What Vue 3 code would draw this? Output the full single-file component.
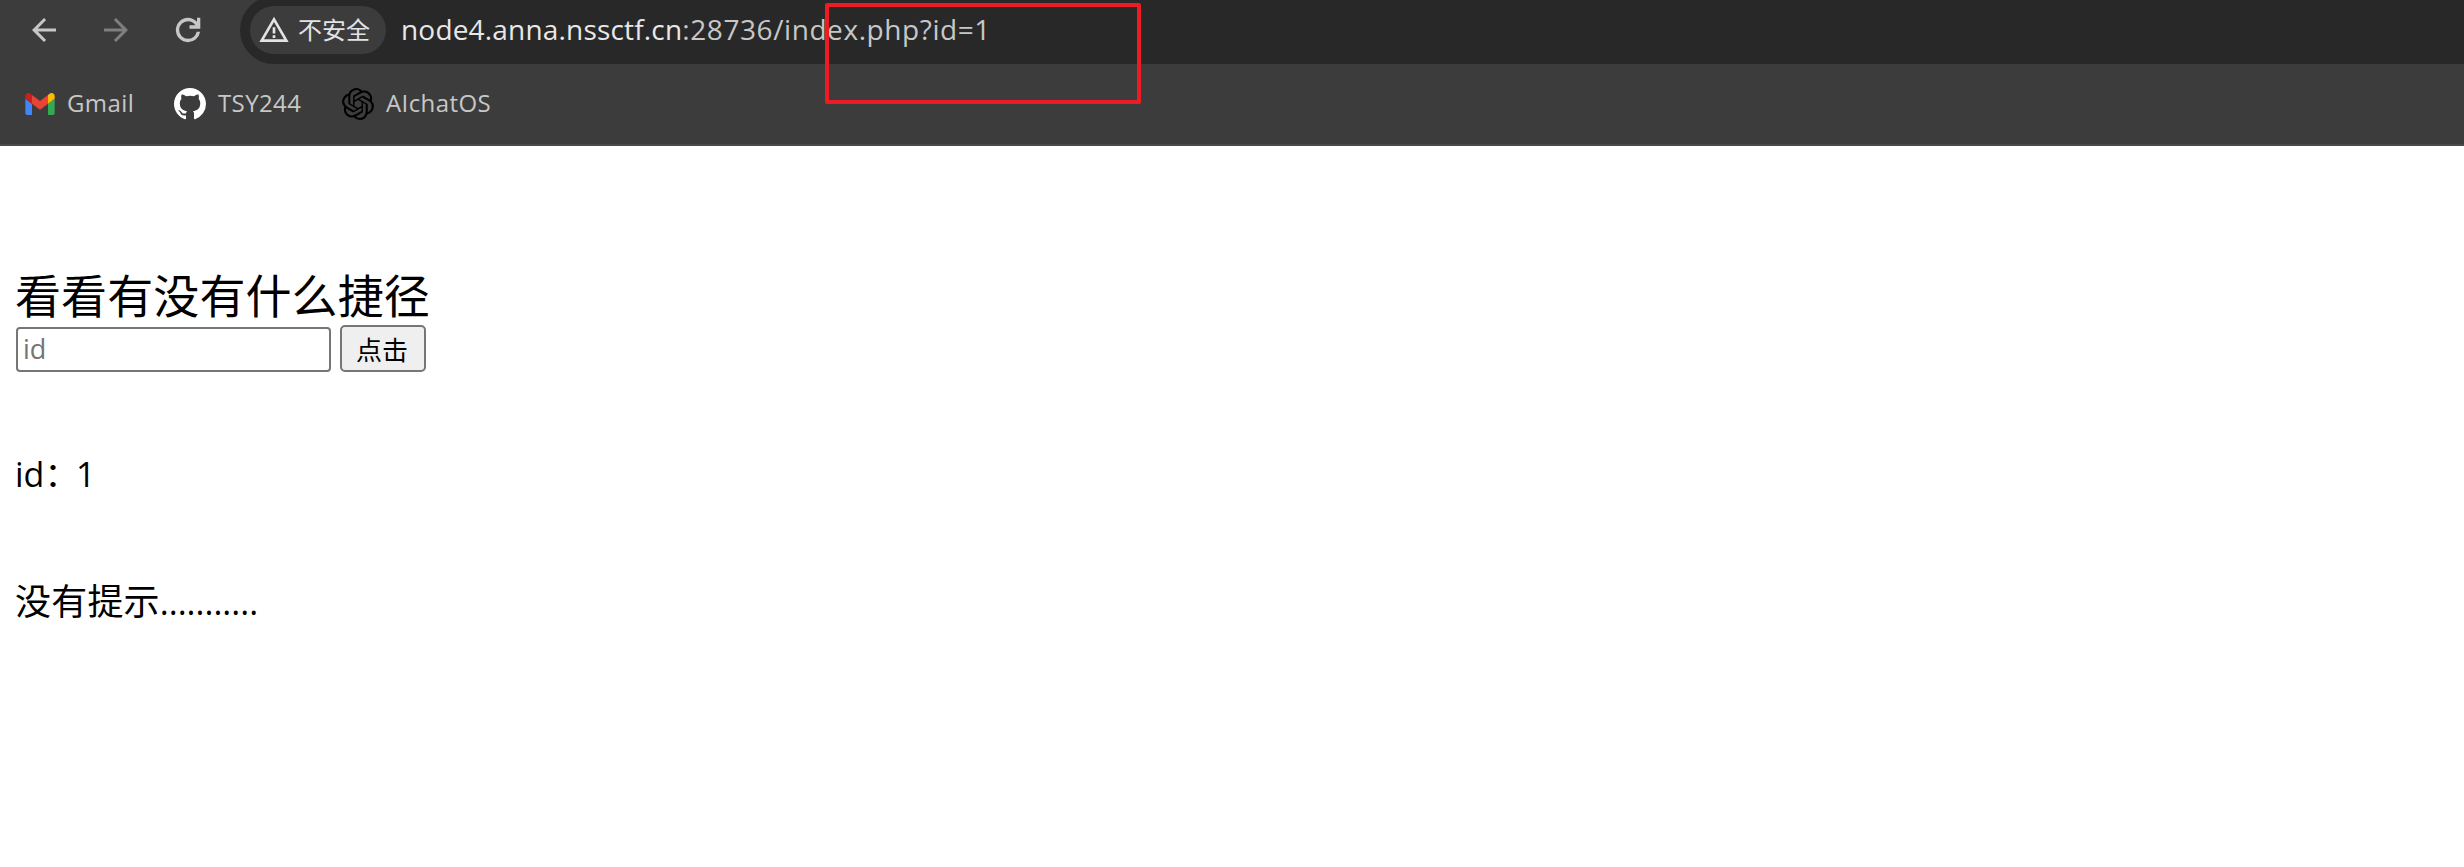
<script setup>
const host = 'node4.anna.nssctf.cn'
const path = ':28736/index.php?id=1'
</script>

<template>
  <div class="window">
    <header class="chrome">
      <div class="toolbar">
        <nav class="nav">
          <svg class="nav-icon" viewBox="0 0 24 24"><path d="M20 11H7.83l5.59-5.59L12 4l-8 8 8 8 1.41-1.41L7.83 13H20v-2z" /></svg>
          <svg class="nav-icon dim" viewBox="0 0 24 24"><path d="M4 11h12.17l-5.59-5.59L12 4l8 8-8 8-1.41-1.41L16.17 13H4v-2z" /></svg>
          <svg class="nav-icon" viewBox="0 0 24 24"><path d="M12 20.1q-3.38 0-5.74-2.36T3.9 12t2.36-5.74T12 3.9q1.725 0 3.3.713T18 6.55V3.9h2.2v7.2H13V8.9h3.9q-.8-1.3-2.1-2T12 6.1Q9.55 6.1 7.82 7.82T6.1 12t1.72 4.18T12 17.9q2.1 0 3.7-1.3T17.8 13.200h2.3q-.5 3-2.8 4.950T12 20.1z" /></svg>
        </nav>
        <div class="omnibox">
          <div class="chip">
            <svg class="warn" viewBox="0 0 24 24"><path d="M12 5.99L19.53 19H4.47L12 5.99M12 2L1 21h22L12 2zm1 14h-2v2h2v-2zm0-6h-2v4.7h2V10z" /></svg>
            <span class="chip-text">不安全</span>
          </div>
          <div class="url"><span class="host">{{ host }}</span><span class="path">{{ path }}</span></div>
        </div>
      </div>
      <div class="bookmarks">
        <div class="bookmark gmail">
          <svg class="gmail-icon" viewBox="52 42 88 66">
            <path fill="#4285f4" d="M58 108h14V74L52 59v43c0 3.320 2.690 6 6 6" />
            <path fill="#34a853" d="M120 108h14c3.320 0 6-2.690 6-6V59l-20 15" />
            <path fill="#fbbc04" d="M120 48v26l20-15v-8c0-7.420-8.470-11.650-14.400-7.200" />
            <path fill="#ea4335" d="M72 74V48l24 18 24-18v26L96 92" />
            <path fill="#c5221f" d="M52 51v8l20 15V48l-5.600-4.200c-5.940-4.450-14.400-.220-14.400 7.200" />
          </svg>
          <span class="label">Gmail</span>
        </div>
        <div class="bookmark github">
          <svg class="mark" viewBox="0 0 16 16" fill="#fff"><path d="M8 0C3.580 0 0 3.580 0 8c0 3.540 2.290 6.530 5.470 7.590.4.070.55-.17.55-.38 0-.19-.01-.82-.01-1.490-2.010.37-2.530-.49-2.690-.94-.09-.23-.48-.94-.82-1.130-.28-.15-.68-.52-.01-.53.63-.01 1.080.58 1.230.82.72 1.210 1.870.87 2.330.66.07-.52.28-.87.51-1.070-1.780-.2-3.640-.89-3.640-3.950 0-.87.31-1.590.82-2.150-.08-.2-.36-1.020.08-2.120 0 0 .67-.21 2.200.82.64-.18 1.320-.27 2-.27s1.360.09 2 .27c1.530-1.040 2.200-.82 2.200-.82.44 1.100.16 1.920.08 2.120.51.56.82 1.270.82 2.150 0 3.070-1.870 3.750-3.650 3.950.29.25.54.73.54 1.480 0 1.070-.01 1.930-.01 2.200 0 .21.15.46.55.38A8.010 8.010 0 0 0 16 8c0-4.420-3.580-8-8-8z" /></svg>
          <span class="label">TSY244</span>
        </div>
        <div class="bookmark chat">
          <svg class="mark" viewBox="0 0 24 24" fill="#000"><path d="M22.2819 9.8211a5.9847 5.9847 0 0 0-.5157-4.9108 6.0462 6.0462 0 0 0-6.5098-2.9A6.0651 6.0651 0 0 0 4.9807 4.1818a5.9847 5.9847 0 0 0-3.9977 2.9 6.0462 6.0462 0 0 0 .7427 7.0966 5.98 5.98 0 0 0 .511 4.9107 6.051 6.051 0 0 0 6.5146 2.9001A5.9847 5.9847 0 0 0 13.2599 24a6.0557 6.0557 0 0 0 5.7718-4.2058 5.9894 5.9894 0 0 0 3.9977-2.9001 6.0557 6.0557 0 0 0-.7475-7.0729zm-9.022 12.6081a4.4755 4.4755 0 0 1-2.8764-1.0408l.1419-.0804 4.7783-2.7582a.7948.7948 0 0 0 .3927-.6813v-6.7369l2.02 1.1686a.071.071 0 0 1 .038.052v5.5826a4.504 4.504 0 0 1-4.4945 4.4944zm-9.6607-4.1254a4.4708 4.4708 0 0 1-.5346-3.0137l.142.0852 4.783 2.7582a.7712.7712 0 0 0 .7806 0l5.8428-3.3685v2.3324a.0804.0804 0 0 1-.0332.0615L9.74 19.9502a4.4992 4.4992 0 0 1-6.1408-1.6464zM2.3408 7.8956a4.485 4.485 0 0 1 2.3655-1.9728V11.6a.7664.7664 0 0 0 .3879.6765l5.8144 3.3543-2.0201 1.1685a.0757.0757 0 0 1-.071 0l-4.8303-2.7865A4.504 4.504 0 0 1 2.3408 7.872zm16.5963 3.8558L13.1038 8.364 15.1192 7.2a.0757.0757 0 0 1 .071 0l4.8303 2.7913a4.4944 4.4944 0 0 1-.6765 8.1042v-5.6772a.79.79 0 0 0-.407-.667zm2.0107-3.0231l-.142-.0852-4.7735-2.7818a.7759.7759 0 0 0-.7854 0L9.409 9.2297V6.8974a.0662.0662 0 0 1 .0284-.0615l4.8303-2.7866a4.4992 4.4992 0 0 1 6.6802 4.66zM8.3065 12.863l-2.02-1.1638a.0804.0804 0 0 1-.038-.0567V6.0742a4.4992 4.4992 0 0 1 7.3757-3.4537l-.142.0805L8.704 5.459a.7948.7948 0 0 0-.3927.6813zm1.0976-2.3654l2.602-1.4998 2.6069 1.4998v2.9994l-2.5974 1.4997-2.6067-1.4997Z" /></svg>
          <span class="label">AIchatOS</span>
        </div>
      </div>
    </header>

    <main class="page">
      <div class="heading">看看有没有什么捷径</div>
      <form class="form" @submit.prevent>
        <input class="field" type="text" placeholder="id" />
        <button class="send">点击</button>
      </form>
      <div class="result"><span class="key">id：</span><span>1</span></div>
      <div class="hint"><span class="hint-text">没有提示</span><span class="dots">...........</span></div>
    </main>

    <div class="highlight"></div>
  </div>
</template>

<style>
html,
body {
  background: #fff;
  overflow: hidden;
}
</style>

<style scoped>
.window {
  position: relative;
  height: 867px;
  overflow: hidden;
  background: #fff;
  font-family: "Open Sans", "Noto Sans CJK SC", sans-serif;
}
.chrome {
  box-sizing: border-box;
  height: 146px;
  background: #3c3c3c;
  border-bottom: 2px solid #4a4849;
}
.toolbar {
  display: flex;
  height: 64px;
}
.nav {
  display: flex;
  align-items: center;
  gap: 36px;
  box-sizing: border-box;
  width: 240px;
  height: 60px;
  padding-left: 26px;
}
.nav-icon {
  width: 36px;
  height: 36px;
  fill: #c7c7c7;
}
.dim {
  fill: #7f7f7f;
}
.omnibox {
  flex: 1;
  display: flex;
  align-items: center;
  box-sizing: border-box;
  height: 68px;
  margin-top: -4px;
  padding-left: 10px;
  border-radius: 34px 0 0 34px;
  background: #282828;
}
.chip {
  display: flex;
  align-items: center;
  box-sizing: border-box;
  width: 136px;
  height: 48px;
  padding-left: 8px;
  border-radius: 24px;
  background: #3c3c3c;
}
.warn {
  width: 32px;
  height: 32px;
  fill: #e3e3e3;
}
.chip-text {
  margin-left: 8px;
  color: #e3e3e3;
  font-size: 24px;
  line-height: 34px;
}
.url {
  margin: 0 0 2px 15px;
  font-size: 28px;
  line-height: 40px;
  white-space: nowrap;
}
.host {
  color: #e8e8e8;
  letter-spacing: 0.18px;
}
.path {
  color: #c7c7c7;
  letter-spacing: 0.58px;
}
.bookmarks {
  display: flex;
  align-items: center;
  height: 80px;
  padding-left: 25px;
}
.bookmark {
  display: flex;
  align-items: center;
  color: #c7c7c7;
  font-size: 24px;
  line-height: 34px;
  white-space: nowrap;
}
.gmail {
  width: 149px;
}
.github {
  width: 168px;
}
.gmail-icon {
  width: 30px;
  height: 22px;
}
.mark {
  width: 32px;
  height: 32px;
}
.label {
  margin: 0 0 2px 12px;
  letter-spacing: 0.4px;
}
.page {
  padding: 122px 16px 0 15px;
  color: #000;
}
.heading {
  height: 56px;
  font-size: 46px;
  line-height: 54px;
  letter-spacing: 0.1px;
  white-space: nowrap;
}
.form {
  display: flex;
  align-items: flex-end;
  gap: 9px;
  height: 48px;
  padding-left: 1px;
}
.field {
  box-sizing: border-box;
  width: 315px;
  height: 45px;
  padding: 0 6px 2px 5px;
  border: 2px solid #767676;
  border-radius: 4px;
  background: #fff;
  font: 27px "Open Sans", sans-serif;
}
.field::placeholder {
  color: #757575;
}
.send {
  box-sizing: border-box;
  width: 86px;
  height: 47px;
  padding: 0 2px 0 0;
  border: 2px solid #767676;
  border-radius: 5px;
  background: #efefef;
  color: #000;
  font: 26px "Noto Sans CJK SC", sans-serif;
}
.result,
.hint {
  display: flex;
  height: 48px;
  font-size: 36px;
  line-height: 48px;
}
.result {
  margin-top: 78px;
  font-size: 34px;
}
.key {
  width: 61px;
  white-space: nowrap;
}
.hint {
  margin-top: 80px;
}
.hint-text {
  letter-spacing: 0.2px;
}
.dots {
  font-size: 34px;
}
.highlight {
  position: absolute;
  left: 825px;
  top: 3px;
  box-sizing: border-box;
  width: 316px;
  height: 101px;
  border: 4px solid #ed1c24;
  border-radius: 2px;
}
</style>
